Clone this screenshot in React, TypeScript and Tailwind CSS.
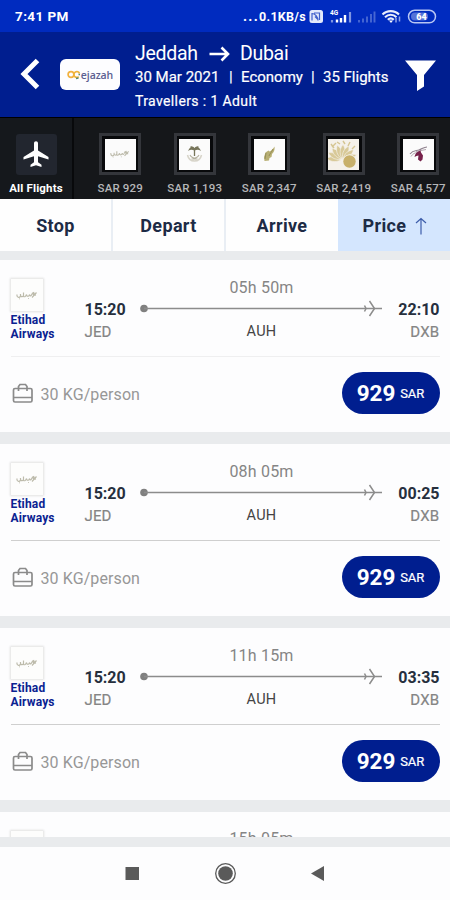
import React from "react";

type Flight = {
  duration: string;
  arrive: string;
  divider: string;
};

const flights: Flight[] = [
  { duration: "05h 50m", arrive: "22:10", divider: "bg-[#efeff0]" },
  { duration: "08h 05m", arrive: "00:25", divider: "bg-[#cfcfcf]" },
  { duration: "11h 15m", arrive: "03:35", divider: "bg-[#cfcfcf]" },
];

const EtihadMark: React.FC<{ className?: string }> = ({ className }) => (
  <svg viewBox="0 0 22 9" className={className} fill="none" stroke="#bdbbab">
    <path
      strokeWidth="1.2"
      d="M1 3.5c-.5 3 2.500 4 3.500 1.500V3c-.5 3 2 3.500 3 1.500V1.500v4c1.500.8 2.500-.5 3-2 .2 2.500 2.500 2.500 3 0 .5 2 2 2 2.500-1M16 6.500l4.500-5M16.500 1.500c0 2 1.500 3 3.500 2.500M17.500 1l1 3"
    />
    <path strokeWidth=".8" d="M3 7.800h1M12 7.500h1" />
  </svg>
);

const SaudiaMark = () => (
  <svg viewBox="0 0 31 31" className="size-[31px]" fill="none">
    <path
      d="M15.500 17V9.500M15.500 10c-2-2-4-1.500-5 .5 2-1 3.500-.5 5 .5 1.500-1 3-1.500 5-.5-1-2-3-2.500-5-.5M15.500 10c-1-2-2.500-2.500-4-2M15.500 10c1-2 2.500-2.500 4-2"
      stroke="#77755a"
      strokeWidth="1.300"
    />
    <path d="M11 16c1 2.500 4 3.500 7.500 4M20 16c-1 2.500-4 3.500-7.500 4" stroke="#b5b2a0" strokeWidth="1.100" />
    <path d="M8.500 16c1 4.500 4 6 7 6s6-1.500 7-6" stroke="#d7d4c9" strokeWidth="1.500" />
  </svg>
);

const GulfMark = () => (
  <svg viewBox="0 0 31 31" className="size-[31px]">
    <path d="M20.500 7.500c.5 3-.5 5.500-2.500 7.500l-.5 3-2 1-.5 2.500-4.500.5-.5-4 1.500-4.500 3-2 1 1c2-1 3.500-2.500 5-5z" fill="#b8af73" />
    <path d="M19 10c-1 3-3 4-4 7M12 14l-1 6" stroke="#958e58" strokeWidth="1" fill="none" />
  </svg>
);

const petals = [-84, -62, -40, -18, 4, 26, 48, 70];

const PetalMark = () => (
  <svg viewBox="0 0 31 31" className="size-[31px]">
    <rect width="31" height="31" fill="#f5f1ea" />
    {petals.map((angle) => (
      <path
        key={angle}
        d="M14 20C10.500 14 11 10 14 5.500c3 4.500 3.500 8.500 0 14.500z"
        fill="#d8c998"
        stroke="#f5f1ea"
        strokeWidth=".6"
        transform={`rotate(${angle} 14 21)`}
      />
    ))}
    <path d="M3 5l3 4M4 8l4-4M9 3l3 2M15 2l2 3M22 3l-2 4M27 7l-3 3" stroke="#d5c592" strokeWidth="1.400" />
    <circle cx="21.500" cy="22.500" r="7" fill="#f5f1ea" />
    <circle cx="21.500" cy="22.500" r="6.200" fill="#c8b06a" />
  </svg>
);

const QatarMark = () => (
  <svg viewBox="0 0 31 31" className="size-[31px]">
    <path d="M7 15c3-4 6-3 9-4s5-3 8-3" stroke="#8d7f8c" strokeWidth="1.100" fill="none" />
    <path d="M8 17.500c2-3 4-4 6-3.500M13 12.500l10-2" stroke="#b3a6b0" strokeWidth="1" fill="none" />
    <path d="M11.500 18c.5-3.500 2.500-5.500 6-6.500l.5 2 2 3-.5 4-2 2-2.500-2 .5-4-2 .5z" fill="#76204a" />
  </svg>
);

const airlines = [
  { price: "SAR 929", mark: <EtihadMark className="w-[20px]" /> },
  { price: "SAR 1,193", mark: <SaudiaMark /> },
  { price: "SAR 2,347", mark: <GulfMark /> },
  { price: "SAR 2,419", mark: <PetalMark /> },
  { price: "SAR 4,577", mark: <QatarMark /> },
];

const StatusBar = () => (
  <div className="flex h-8 items-center bg-[#002bbf] pl-[15px] text-white">
    <span className="w-[228px] text-[13.500px] font-bold leading-8 tracking-[0.400px]">
      7:41 PM
    </span>
    <span className="w-[66px] whitespace-nowrap text-[12.500px] font-bold leading-8 tracking-[0.250px]">
      <span className="text-[14px] tracking-[1.300px]">...</span>0.1KB/s
    </span>
    <svg width="135" height="32" viewBox="309 0 135 32" fill="none">
      <rect x="309.500" y="10" width="13.500" height="13" rx="2.500" fill="#e3e9fb" />
      <path d="M312 20.500v-7c3 0 6 3.500 6 7M314 13h5.500v7M315 16.500l3 3" stroke="#4060cb" strokeWidth="1.200" />
      <text x="330" y="14.500" fontSize="6.500" fontWeight="700" fill="#fff">
        4G
      </text>
      <path d="M337 19.500v3M341 18v4.500M345 15v7.500" stroke="#fff" strokeWidth="2.400" />
      <path d="M332 20v2.500M350 12v10.500" stroke="#7f96e2" strokeWidth="2.200" />
      <path d="M359 20v2.500M363 18.500v4M367 16.500v6M371 14v8.500M374.500 11.500v11" stroke="#4767d3" strokeWidth="1.900" />
      <g stroke="#e8edfc" strokeWidth="2.100">
        <path d="M382.500 14.500c4.500-4.500 12-4.500 16.500 0" />
        <path d="M385 17.200c3.300-3.200 8.200-3.200 11.500 0" />
        <path d="M387.800 19.700c1.800-1.700 4.200-1.700 6 0" />
      </g>
      <path d="M389 20.500l2 2.500 2-2.500z" fill="#fff" />
      <path d="M396 18v4.500M399.500 16.500v5" stroke="#8ea3e8" strokeWidth="1.500" />
      <rect x="408.500" y="10.300" width="27" height="12.500" rx="6.250" stroke="#b8c6f3" strokeWidth="1.500" />
      <rect x="411" y="12.500" width="17" height="8" rx="4" fill="#5573d7" />
      <text x="421.500" y="20" fontSize="9" fontWeight="900" fill="#fff" textAnchor="middle">
        64
      </text>
    </svg>
  </div>
);

const Header = () => (
  <header className="flex h-[86px] border-b border-black bg-[#001e8f] text-white">
    <svg width="60" height="85" viewBox="0 0 60 85" fill="none" className="shrink-0">
      <path d="M37.500 28.500L24 42l13.500 13.500" stroke="#fff" strokeWidth="5" />
    </svg>
    <div className="mt-[27px] flex h-[31px] w-[60px] shrink-0 items-center justify-center rounded-md bg-[#fdfdff]">
      <svg width="14" height="14" viewBox="0 0 14 14" fill="none" strokeWidth="1.700">
        <circle cx="4" cy="6.500" r="2.900" stroke="#f2b23f" />
        <path d="M12.500 5.500a2.900 2.900 0 1 0-.8 3.200" stroke="#efb43c" />
        <path d="M9 10.500l2.500-.5M11.500 6.500h1.500" stroke="#5c8b70" />
      </svg>
      <span className="font-['Open_Sans'] text-[10.500px] font-semibold leading-4 tracking-[-0.1px] text-[#5c6091]">
        ejazah
      </span>
    </div>
    <div className="ml-[15px] w-[263px] shrink-0 whitespace-nowrap pt-[10px] leading-6">
      <div className="flex h-6 items-center text-[19.500px] tracking-[-0.300px]">
        <span className="w-[74px]">Jeddah</span>
        <svg width="31" height="16" viewBox="0 0 31 16" fill="none" stroke="#fff" strokeWidth="2.600">
          <path d="M0.500 8h19M12.500 1.500l6.500 6.500-6.500 6.500" />
        </svg>
        <span>Dubai</span>
      </div>
      <div className="-mt-px flex text-[15px] [-webkit-text-stroke:0.200px_#fff]">
        <span className="w-[94px]">30 Mar 2021</span>
        <span className="w-[12px]">|</span>
        <span className="w-[70px]">Economy</span>
        <span className="w-[12px]">|</span>
        <span>35 Flights</span>
      </div>
      <div className="text-[14px] tracking-[0.380px] [-webkit-text-stroke:0.200px_#fff]">Travellers : 1 Adult</div>
    </div>
    <svg width="40" height="60" viewBox="0 0 40 60" className="mt-[14px]">
      <path d="M7 14.500h31L26 29v11.500L19 45V29z" fill="#fff" />
    </svg>
  </header>
);

const AirlineStrip = () => (
  <div className="flex h-[81px] overflow-hidden bg-[#15171a]">
    <div className="flex w-[74px] shrink-0 flex-col items-center border-r-2 border-[#08090b] bg-[#15181c] pt-4">
      <div className="flex size-[41px] items-center justify-center rounded-[3px] bg-[#22262f]">
        <svg viewBox="0 0 26 27" width="26" height="27" fill="#fff">
          <path d="M13 .3c-1.200 0-2 .9-2 2V9.500L.5 16v2.500l10.500-3.300v6l-3.500 2.600v2.200L13 24.300l5.500 1.700v-2.200L15 21.200v-6l10.500 3.300V16L15 9.500V2.300c0-1.100-.8-2-2-2z" />
        </svg>
      </div>
      <span className="mt-[5px] whitespace-nowrap text-[11.500px] font-bold leading-4 tracking-[0.150px] text-white">
        All Flights
      </span>
    </div>
    <div className="ml-[9px] flex shrink-0">
      {airlines.map((airline) => (
        <div key={airline.price} className="flex w-[74.500px] flex-col items-center pt-[15px]">
          <div className="flex size-[42px] items-center justify-center border-[3px] border-[#34363b] bg-[#08090b]">
            <div className="flex size-[31px] items-center justify-center overflow-hidden bg-[#fbfbfb]">
              {airline.mark}
            </div>
          </div>
          <span className="mt-[5px] whitespace-nowrap text-[11.500px] font-medium leading-4 tracking-[0.150px] text-[#b5b6b8]">
            {airline.price}
          </span>
        </div>
      ))}
    </div>
  </div>
);

const SortTabs = () => (
  <div className="grid h-[53px] grid-cols-[113px_113px_112px_112px] grid-rows-[52px] text-[18px] font-bold leading-[52px] tracking-[0.350px] text-[#1d2b45]">
    <div className="border-r-2 border-[#e9eef4] bg-[#fefefe] pt-px text-center">Stop</div>
    <div className="border-r-2 border-[#e9eef4] bg-[#fefefe] pt-px text-center">Depart</div>
    <div className="bg-[#fefefe] pt-px text-center">Arrive</div>
    <div className="flex items-center justify-center bg-[#d4e6fe] pl-0.5 pt-px">
      <span>Price</span>
      <svg width="12" height="18" viewBox="0 0 12 18" fill="none" stroke="#3d5daa" strokeWidth="1.200" className="ml-[9px]">
        <path d="M6 17.500V1.500M1 6l5-4.500L11 6" />
      </svg>
    </div>
  </div>
);

const FlightPath = () => (
  <svg width="240" height="20" viewBox="0 0 240 20" fill="none" stroke="#8c8c8c" className="overflow-visible">
    <circle cx="4" cy="9.500" r="3.800" fill="#808080" stroke="none" />
    <path d="M4 9.500h238" strokeWidth="1.700" />
    <path d="M229.500 2l5 7.500-5 7.500M224.500 6.500l1.500 3-1.500 3" strokeWidth="1.500" />
  </svg>
);

const AirlineTile = () => (
  <div className="flex size-8 shrink-0 items-center justify-center bg-[#fdfdfc] shadow-[0_0_2px_1px_#e2e2e1]">
    <EtihadMark className="w-[22px]" />
  </div>
);

const FlightCard: React.FC<{ flight: Flight }> = ({ flight }) => (
  <article className="mb-3 h-[172px] shrink-0 bg-[#fdfdfe] px-[10.500px]">
    <div className="flex h-24">
      <div className="w-[74px] shrink-0 pt-[19px]">
        <AirlineTile />
        <div className="mt-[2px] text-[12px] font-bold leading-[14px] tracking-[0.150px] text-[#0a2291]">
          Etihad
          <br />
          Airways
        </div>
      </div>
      <div className="w-[53px] shrink-0 pt-[39px]">
        <div className="text-[16px] font-bold leading-[22px] text-[#262f3d]">15:20</div>
        <div className="text-[15px] leading-[22px] tracking-[0.100px] text-[#858585] [-webkit-text-stroke:0.200px_#858585]">JED</div>
      </div>
      <div className="flex w-[248px] shrink-0 flex-col items-center pt-[17px]">
        <div className="text-[16px] leading-[22px] tracking-[0.200px] text-[#858585]">{flight.duration}</div>
        <div className="mr-1 h-5 w-[240px]">
          <FlightPath />
        </div>
        <div className="pt-[2px] text-[14.500px] leading-[22px] tracking-[0.250px] text-[#444]">AUH</div>
      </div>
      <div className="flex-1 pt-[39px] text-right">
        <div className="text-[16px] font-bold leading-[22px] text-[#262f3d]">{flight.arrive}</div>
        <div className="text-[15px] leading-[22px] tracking-[0.300px] text-[#858585] [-webkit-text-stroke:0.200px_#858585]">DXB</div>
      </div>
    </div>
    <div className={`h-px ${flight.divider}`} />
    <div className="flex h-[75px] items-center text-[16px] tracking-[0.100px] text-[#979797]">
      <svg width="30" height="22" viewBox="0 0 30 22" fill="none" stroke="#8b8b8b" strokeWidth="1.700" className="mb-[3px]">
        <rect x="2.500" y="6.500" width="18.500" height="13.500" rx="1.500" />
        <path d="M2.500 15.500H21M7.500 9V4.500L9 2.500h5.500l1.500 2V9" />
      </svg>
      <span>30 KG/person</span>
      <button className="mb-[3px] ml-auto flex h-[42px] w-[98px] items-center justify-center gap-[5px] rounded-full bg-[#001e8f] text-white">
        <span className="pt-px text-[22.500px] font-bold tracking-[-0.100px]">929</span>
        <span className="pt-px text-[13px] leading-none tracking-[-0.100px] [-webkit-text-stroke:0.200px_#fff]">SAR</span>
      </button>
    </div>
  </article>
);

// Next result, only its top edge is scrolled into view
const PeekCard = () => (
  <article className="flex h-[25px] shrink-0 overflow-hidden bg-[#fdfdfe] px-[10.500px]">
    <div className="w-[127px] shrink-0 pt-[19px]">
      <AirlineTile />
    </div>
    <div className="w-[248px] pt-4 text-center text-[16px] leading-[22px] tracking-[0.200px] text-[#858585]">
      15h 05m
    </div>
  </article>
);

const NavigationBar = () => (
  <div className="flex h-[53px] justify-center bg-[#fdfdfe]">
    <svg width="450" height="53" viewBox="0 0 450 53" fill="#5a5a5a">
      <rect x="125.500" y="20" width="13.500" height="13" />
      <circle cx="225.500" cy="26.500" r="9.800" fill="none" stroke="#5a5a5a" strokeWidth="1.300" />
      <circle cx="225.500" cy="26.500" r="7.300" />
      <path d="M311 26.500L324 19v15z" />
    </svg>
  </div>
);

export default function App() {
  return (
    <div className="flex h-[900px] w-[450px] flex-col overflow-hidden bg-[#e9ebed] font-['Roboto',sans-serif]">
      <StatusBar />
      <Header />
      <AirlineStrip />
      <SortTabs />
      <main className="flex h-[585px] flex-col overflow-hidden pt-2">
        {flights.map((flight) => (
          <FlightCard key={flight.duration} flight={flight} />
        ))}
        <PeekCard />
      </main>
      <div className="h-[10px] shrink-0" />
      <NavigationBar />
    </div>
  );
}
